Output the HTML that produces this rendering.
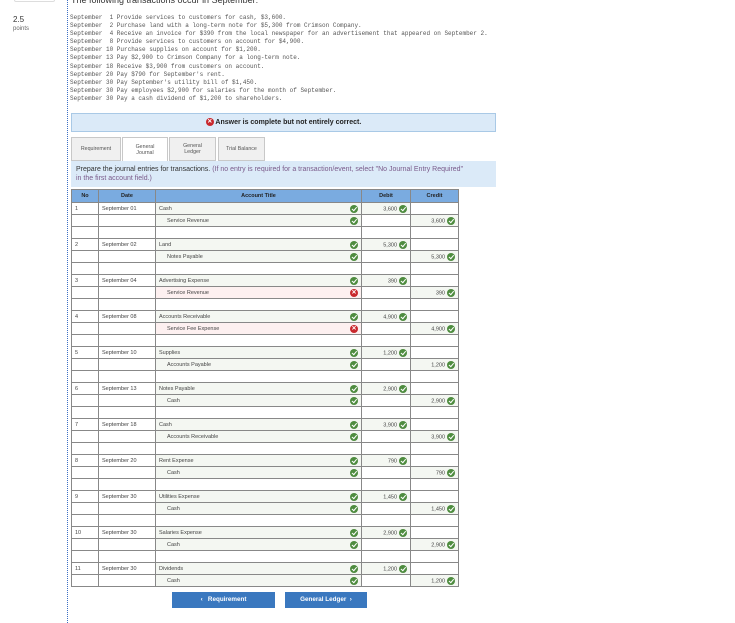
<!DOCTYPE html>
<html><head><meta charset="utf-8"><style>
*{margin:0;padding:0;box-sizing:border-box}
body{width:735px;height:623px;background:#fff;position:relative;overflow:hidden;font-family:"Liberation Sans",sans-serif;color:#333}
.dl{position:absolute;left:67px;top:0;height:623px;border-left:1px dotted #3b6fc4}
.tb{position:absolute;left:14px;top:-4px;width:41px;height:6px;border:1px solid #ddd;border-radius:2px}
.pts{position:absolute;left:13px;top:15px;font-size:8px;color:#333}
.pts2{position:absolute;left:13px;top:26px;font-size:6px;color:#666}
.hd{position:absolute;left:71px;top:-5px;font-size:9px;color:#333}
.tx{position:absolute;left:70px;top:14px;font-family:"Liberation Mono",monospace;font-size:6px;line-height:8.1px;color:#555;white-space:pre}
.ban{position:absolute;left:71px;top:113px;width:425px;height:19px;background:#dbeaf8;border:1px solid #a9c9e6;font-size:7px;font-weight:bold;text-align:center;line-height:17px;color:#222}
.xi{display:inline-block;width:8px;height:8px;border-radius:50%;background:#c8282d;color:#fff;font-size:6px;line-height:8px;text-align:center;vertical-align:middle;font-weight:bold}
.tab{position:absolute;top:137px;height:24px;border:1px solid #c8c8c8;background:#f0f0f0;font-size:5.3px;color:#555;text-align:center;display:flex;align-items:center;justify-content:center;line-height:6px}
.tab.a{background:#fff;border-bottom:none;height:25px}
.ins{position:absolute;left:71px;top:161px;width:425px;height:26px;background:#dbeaf8;font-size:7px;color:#333;padding:5px 30px 0 5px;line-height:8.5px}
.ins span{color:#7a5a8a}
table{position:absolute;left:71px;top:189px;border-collapse:collapse;font-size:5.5px;color:#444}
td,th{border:1px solid #888;height:12px;padding:0 3px;white-space:nowrap}
th{background:#7aabe0;color:#222;font-weight:bold;height:13px;text-align:center}
.c1{width:27px}.c2{width:57px}.c3{width:206px}.c4{width:49px}.c5{width:48px}
.f{background:#f4f7f2}
.bad{background:#fdf0f0}
.r{text-align:right}
.ok{display:inline-block;width:8px;height:8px;border-radius:50%;background:#4e8c3f;vertical-align:middle;position:relative;margin-left:2px}
.ok::after{content:"";position:absolute;left:2.5px;top:1.3px;width:2px;height:3.5px;border:solid #fff;border-width:0 1.3px 1.3px 0;transform:rotate(40deg)}
.acc{display:flex;justify-content:space-between;align-items:center}
.in{padding-left:8px}
.btn{position:absolute;top:592px;height:16px;background:#3a78bf;color:#fff;font-size:6.3px;font-weight:bold;text-align:center;line-height:16px}
</style></head><body>
<div class="tb"></div>
<div class="dl"></div>
<div class="pts">2.5</div><div class="pts2">points</div>
<div class="hd">The following transactions occur in September:</div>
<div class="tx">September  1 Provide services to customers for cash, $3,600.
September  2 Purchase land with a long-term note for $5,300 from Crimson Company.
September  4 Receive an invoice for $390 from the local newspaper for an advertisement that appeared on September 2.
September  8 Provide services to customers on account for $4,900.
September 10 Purchase supplies on account for $1,200.
September 13 Pay $2,900 to Crimson Company for a long-term note.
September 18 Receive $3,900 from customers on account.
September 20 Pay $790 for September's rent.
September 30 Pay September's utility bill of $1,450.
September 30 Pay employees $2,900 for salaries for the month of September.
September 30 Pay a cash dividend of $1,200 to shareholders.</div>
<div class="ban"><span class="xi">✕</span> Answer is complete but not entirely correct.</div>
<div class="tab" style="left:71px;width:50px">Requirement</div>
<div class="tab a" style="left:122px;width:46px">General<br>Journal</div>
<div class="tab" style="left:169px;width:47px">General<br>Ledger</div>
<div class="tab" style="left:218px;width:47px">Trial Balance</div>
<div class="ins">Prepare the journal entries for transactions. <span>(If no entry is required for a transaction/event, select "No Journal Entry Required" in the first account field.)</span></div>
<table>
<tr><th class="c1">No</th><th class="c2">Date</th><th class="c3">Account Title</th><th class="c4">Debit</th><th class="c5">Credit</th></tr>
<tr><td>1</td><td>September 01</td><td class="f"><div class="acc">Cash<i class="ok"></i></div></td><td class="f r">3,600<i class="ok"></i></td><td></td></tr>
<tr><td></td><td></td><td class="f"><div class="acc"><span class="in">Service Revenue</span><i class="ok"></i></div></td><td></td><td class="f r">3,600<i class="ok"></i></td></tr>
<tr><td></td><td></td><td></td><td></td><td></td></tr>
<tr><td>2</td><td>September 02</td><td class="f"><div class="acc">Land<i class="ok"></i></div></td><td class="f r">5,300<i class="ok"></i></td><td></td></tr>
<tr><td></td><td></td><td class="f"><div class="acc"><span class="in">Notes Payable</span><i class="ok"></i></div></td><td></td><td class="f r">5,300<i class="ok"></i></td></tr>
<tr><td></td><td></td><td></td><td></td><td></td></tr>
<tr><td>3</td><td>September 04</td><td class="f"><div class="acc">Advertising Expense<i class="ok"></i></div></td><td class="f r">390<i class="ok"></i></td><td></td></tr>
<tr><td></td><td></td><td class="bad"><div class="acc"><span class="in">Service Revenue</span><span class="xi">✕</span></div></td><td></td><td class="f r">390<i class="ok"></i></td></tr>
<tr><td></td><td></td><td></td><td></td><td></td></tr>
<tr><td>4</td><td>September 08</td><td class="f"><div class="acc">Accounts Receivable<i class="ok"></i></div></td><td class="f r">4,900<i class="ok"></i></td><td></td></tr>
<tr><td></td><td></td><td class="bad"><div class="acc"><span class="in">Service Fee Expense</span><span class="xi">✕</span></div></td><td></td><td class="f r">4,900<i class="ok"></i></td></tr>
<tr><td></td><td></td><td></td><td></td><td></td></tr>
<tr><td>5</td><td>September 10</td><td class="f"><div class="acc">Supplies<i class="ok"></i></div></td><td class="f r">1,200<i class="ok"></i></td><td></td></tr>
<tr><td></td><td></td><td class="f"><div class="acc"><span class="in">Accounts Payable</span><i class="ok"></i></div></td><td></td><td class="f r">1,200<i class="ok"></i></td></tr>
<tr><td></td><td></td><td></td><td></td><td></td></tr>
<tr><td>6</td><td>September 13</td><td class="f"><div class="acc">Notes Payable<i class="ok"></i></div></td><td class="f r">2,900<i class="ok"></i></td><td></td></tr>
<tr><td></td><td></td><td class="f"><div class="acc"><span class="in">Cash</span><i class="ok"></i></div></td><td></td><td class="f r">2,900<i class="ok"></i></td></tr>
<tr><td></td><td></td><td></td><td></td><td></td></tr>
<tr><td>7</td><td>September 18</td><td class="f"><div class="acc">Cash<i class="ok"></i></div></td><td class="f r">3,900<i class="ok"></i></td><td></td></tr>
<tr><td></td><td></td><td class="f"><div class="acc"><span class="in">Accounts Receivable</span><i class="ok"></i></div></td><td></td><td class="f r">3,900<i class="ok"></i></td></tr>
<tr><td></td><td></td><td></td><td></td><td></td></tr>
<tr><td>8</td><td>September 20</td><td class="f"><div class="acc">Rent Expense<i class="ok"></i></div></td><td class="f r">790<i class="ok"></i></td><td></td></tr>
<tr><td></td><td></td><td class="f"><div class="acc"><span class="in">Cash</span><i class="ok"></i></div></td><td></td><td class="f r">790<i class="ok"></i></td></tr>
<tr><td></td><td></td><td></td><td></td><td></td></tr>
<tr><td>9</td><td>September 30</td><td class="f"><div class="acc">Utilities Expense<i class="ok"></i></div></td><td class="f r">1,450<i class="ok"></i></td><td></td></tr>
<tr><td></td><td></td><td class="f"><div class="acc"><span class="in">Cash</span><i class="ok"></i></div></td><td></td><td class="f r">1,450<i class="ok"></i></td></tr>
<tr><td></td><td></td><td></td><td></td><td></td></tr>
<tr><td>10</td><td>September 30</td><td class="f"><div class="acc">Salaries Expense<i class="ok"></i></div></td><td class="f r">2,900<i class="ok"></i></td><td></td></tr>
<tr><td></td><td></td><td class="f"><div class="acc"><span class="in">Cash</span><i class="ok"></i></div></td><td></td><td class="f r">2,900<i class="ok"></i></td></tr>
<tr><td></td><td></td><td></td><td></td><td></td></tr>
<tr><td>11</td><td>September 30</td><td class="f"><div class="acc">Dividends<i class="ok"></i></div></td><td class="f r">1,200<i class="ok"></i></td><td></td></tr>
<tr><td></td><td></td><td class="f"><div class="acc"><span class="in">Cash</span><i class="ok"></i></div></td><td></td><td class="f r">1,200<i class="ok"></i></td></tr>
</table>
<div class="btn" style="left:172px;width:103px">&lsaquo;&nbsp;&nbsp; Requirement</div>
<div class="btn" style="left:285px;width:82px">General Ledger &nbsp;&rsaquo;</div>
</body></html>
